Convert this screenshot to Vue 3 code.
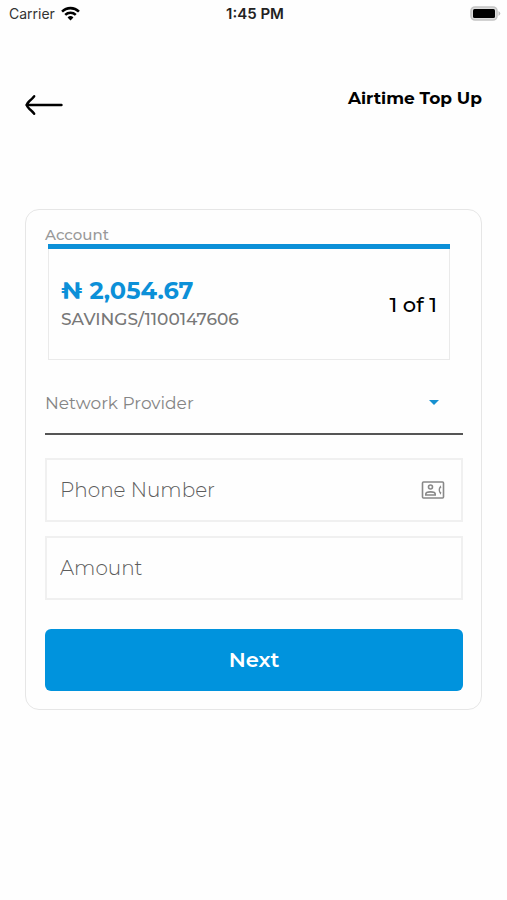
<script setup>
import { ref } from 'vue'

const provider = ref('')
const phone = ref('')
const amount = ref('')
const providers = ['MTN', 'Airtel', 'Glo', '9mobile']
</script>

<template>
  <div class="screen">
    <div class="status">
      <div class="carrier">
        <span>Carrier</span>
        <svg class="wifi" viewBox="0 0 18 14" aria-hidden="true">
          <path d="M1 5.2a11.4 11.4 0 0 1 16 0" />
          <path d="M4 8.3a7.2 7.2 0 0 1 10 0" />
          <path class="dot" d="M6.2 10.7a4 4 0 0 1 5.6 0L9 13.6z" />
        </svg>
      </div>
      <time class="clock">1:45 PM</time>
      <svg class="battery" viewBox="0 0 31 15" aria-hidden="true">
        <rect x="1" y="1" width="26" height="13" rx="4" fill="#ddd" stroke="#c4c4c4" stroke-width="1.6" />
        <rect x="3" y="3" width="22" height="9" rx="1.5" fill="#000" />
        <path d="M28.5 5q3.6 2.5 0 5z" fill="#bbb" />
      </svg>
    </div>

    <header class="header">
      <button class="back" type="button" aria-label="Back">
        <svg viewBox="0 0 38 22" aria-hidden="true">
          <path d="M36.5 11H1.5M9.2 2.2Q7.5 4.5 4.5 7Q2 9.3 1.5 11Q2 12.7 4.5 15Q7.5 17.5 9.2 19.8" />
        </svg>
      </button>
      <h1 class="title">Airtime Top Up</h1>
    </header>

    <form class="card" @submit.prevent>
      <h2 class="label">Account</h2>
      <section class="account">
        <div class="account-body">
          <div>
            <p class="balance">₦ 2,054.67</p>
            <p class="number">SAVINGS/1100147606</p>
          </div>
          <p class="count">1 of 1</p>
        </div>
      </section>

      <div class="select-row">
        <select v-model="provider" class="select" aria-label="Network Provider">
          <option value="" disabled>Network Provider</option>
          <option v-for="p in providers" :key="p" :value="p">{{ p }}</option>
        </select>
        <svg class="caret" viewBox="0 0 10 5" aria-hidden="true"><path d="M0 0h10L5 5z" /></svg>
      </div>

      <div class="field">
        <input v-model="phone" type="tel" placeholder="Phone Number" aria-label="Phone Number" />
        <button class="contacts" type="button" aria-label="Choose a contact">
          <svg viewBox="0 0 24 18" aria-hidden="true">
            <rect x="1.5" y="1" width="21" height="16" rx="1" />
            <circle cx="9.5" cy="6" r="2" />
            <path d="M4.8 14v-1c0-2.800 9.400-2.800 9.400 0v1z" />
            <path class="handset" d="M19.600 4.200L20.400 6.400L19.200 7.400Q18.800 9 19.200 10.600L20.400 11.600L19.600 13.800Q15.600 9 19.600 4.200z" />
          </svg>
        </button>
      </div>
      <div class="field">
        <input v-model="amount" inputmode="decimal" placeholder="Amount" aria-label="Amount" />
      </div>

      <button class="next" type="submit">Next</button>
    </form>
  </div>
</template>

<style>
body {
  margin: 0;
  background: #fefefe;
}
</style>

<style scoped>
.screen {
  color: #000;
  font-family: Montserrat, Inter, "Noto Sans", sans-serif;
}
h1, h2, p {
  margin: 0;
}
button {
  padding: 0;
  border: 0;
  background: none;
  font: inherit;
  cursor: pointer;
}
svg {
  display: block;
}
.status {
  display: grid;
  grid-template-columns: 1fr auto 1fr;
  align-items: center;
  height: 26px;
  padding: 0 6px 0 9px;
  font-family: Inter, sans-serif;
  font-size: 15px;
}
.carrier {
  display: flex;
  align-items: center;
  gap: 6px;
  font-size: 14px;
  color: #333;
}
.wifi {
  width: 19px;
  height: 15px;
  fill: none;
  stroke: #000;
  stroke-width: 2.4;
}
.wifi .dot {
  fill: #000;
  stroke: none;
}
.clock {
  font-weight: 600;
  color: #222;
}
.battery {
  width: 31px;
  height: 15px;
  justify-self: end;
}
.header {
  display: flex;
  justify-content: space-between;
  align-items: flex-start;
  padding: 60px 25px 0;
}
.back {
  padding-top: 8px;
}
.back svg {
  width: 38px;
  height: 22px;
  fill: none;
  stroke: #000;
  stroke-width: 2.4;
  stroke-linecap: round;
  stroke-linejoin: round;
}
.title {
  font-size: 17px;
  line-height: 24px;
  font-weight: 700;
}
.card {
  margin: 93px 25px 0;
  padding: 16px 18px 18px 19px;
  border: 1px solid #e6e6e6;
  border-radius: 14px;
}
.label {
  margin-bottom: 1px;
  font-size: 15px;
  line-height: 17px;
  font-weight: 500;
  color: #999;
}
.account {
  margin: 0 13px 0 3px;
  border-top: 5px solid #0c90d8;
}
.account-body {
  display: flex;
  align-items: center;
  justify-content: space-between;
  box-sizing: border-box;
  height: 111px;
  padding: 0 12px;
  border: 1px solid #eaeaea;
  border-top: 0;
}
.balance {
  font-size: 24px;
  line-height: 30px;
  font-weight: 700;
  color: #0c90d8;
}
.number {
  font-size: 17px;
  line-height: 26px;
  font-weight: 500;
  color: #777;
}
.count {
  font-size: 21px;
  font-weight: 500;
}
.select-row {
  display: flex;
  align-items: center;
  height: 61px;
  margin-top: 12px;
  padding-right: 24px;
  border-bottom: 2px solid #555;
}
.select {
  flex: 1;
  min-width: 0;
  padding: 0;
  border: 0;
  appearance: none;
  background: none;
  color: #858585;
  font: 400 17px Montserrat, Inter, sans-serif;
}
.caret {
  width: 10px;
  height: 5px;
  fill: #1690d0;
  pointer-events: none;
}
.field {
  display: flex;
  align-items: center;
  box-sizing: border-box;
  height: 64px;
  margin-top: 14px;
  padding: 0 16px 0 13px;
  border: 2px solid #f0f0f0;
}
.select-row + .field {
  margin-top: 23px;
}
.field input {
  flex: 1;
  min-width: 0;
  padding: 0;
  border: 0;
  outline: none;
  background: none;
  color: #333;
  font: 300 20px Montserrat, Inter, sans-serif;
}
.field input::placeholder {
  color: #5c5c5c;
  opacity: 1;
}
.contacts svg {
  width: 24px;
  height: 18px;
  fill: none;
  stroke: #888;
  stroke-width: 1.6;
}
.contacts .handset {
  fill: #888;
  stroke: none;
}
.next {
  display: block;
  width: 100%;
  height: 62px;
  margin-top: 29px;
  padding-bottom: 2px;
  border-radius: 6px;
  background: #0093dd;
  color: #fff;
  font-size: 21px;
  font-weight: 600;
}
</style>
